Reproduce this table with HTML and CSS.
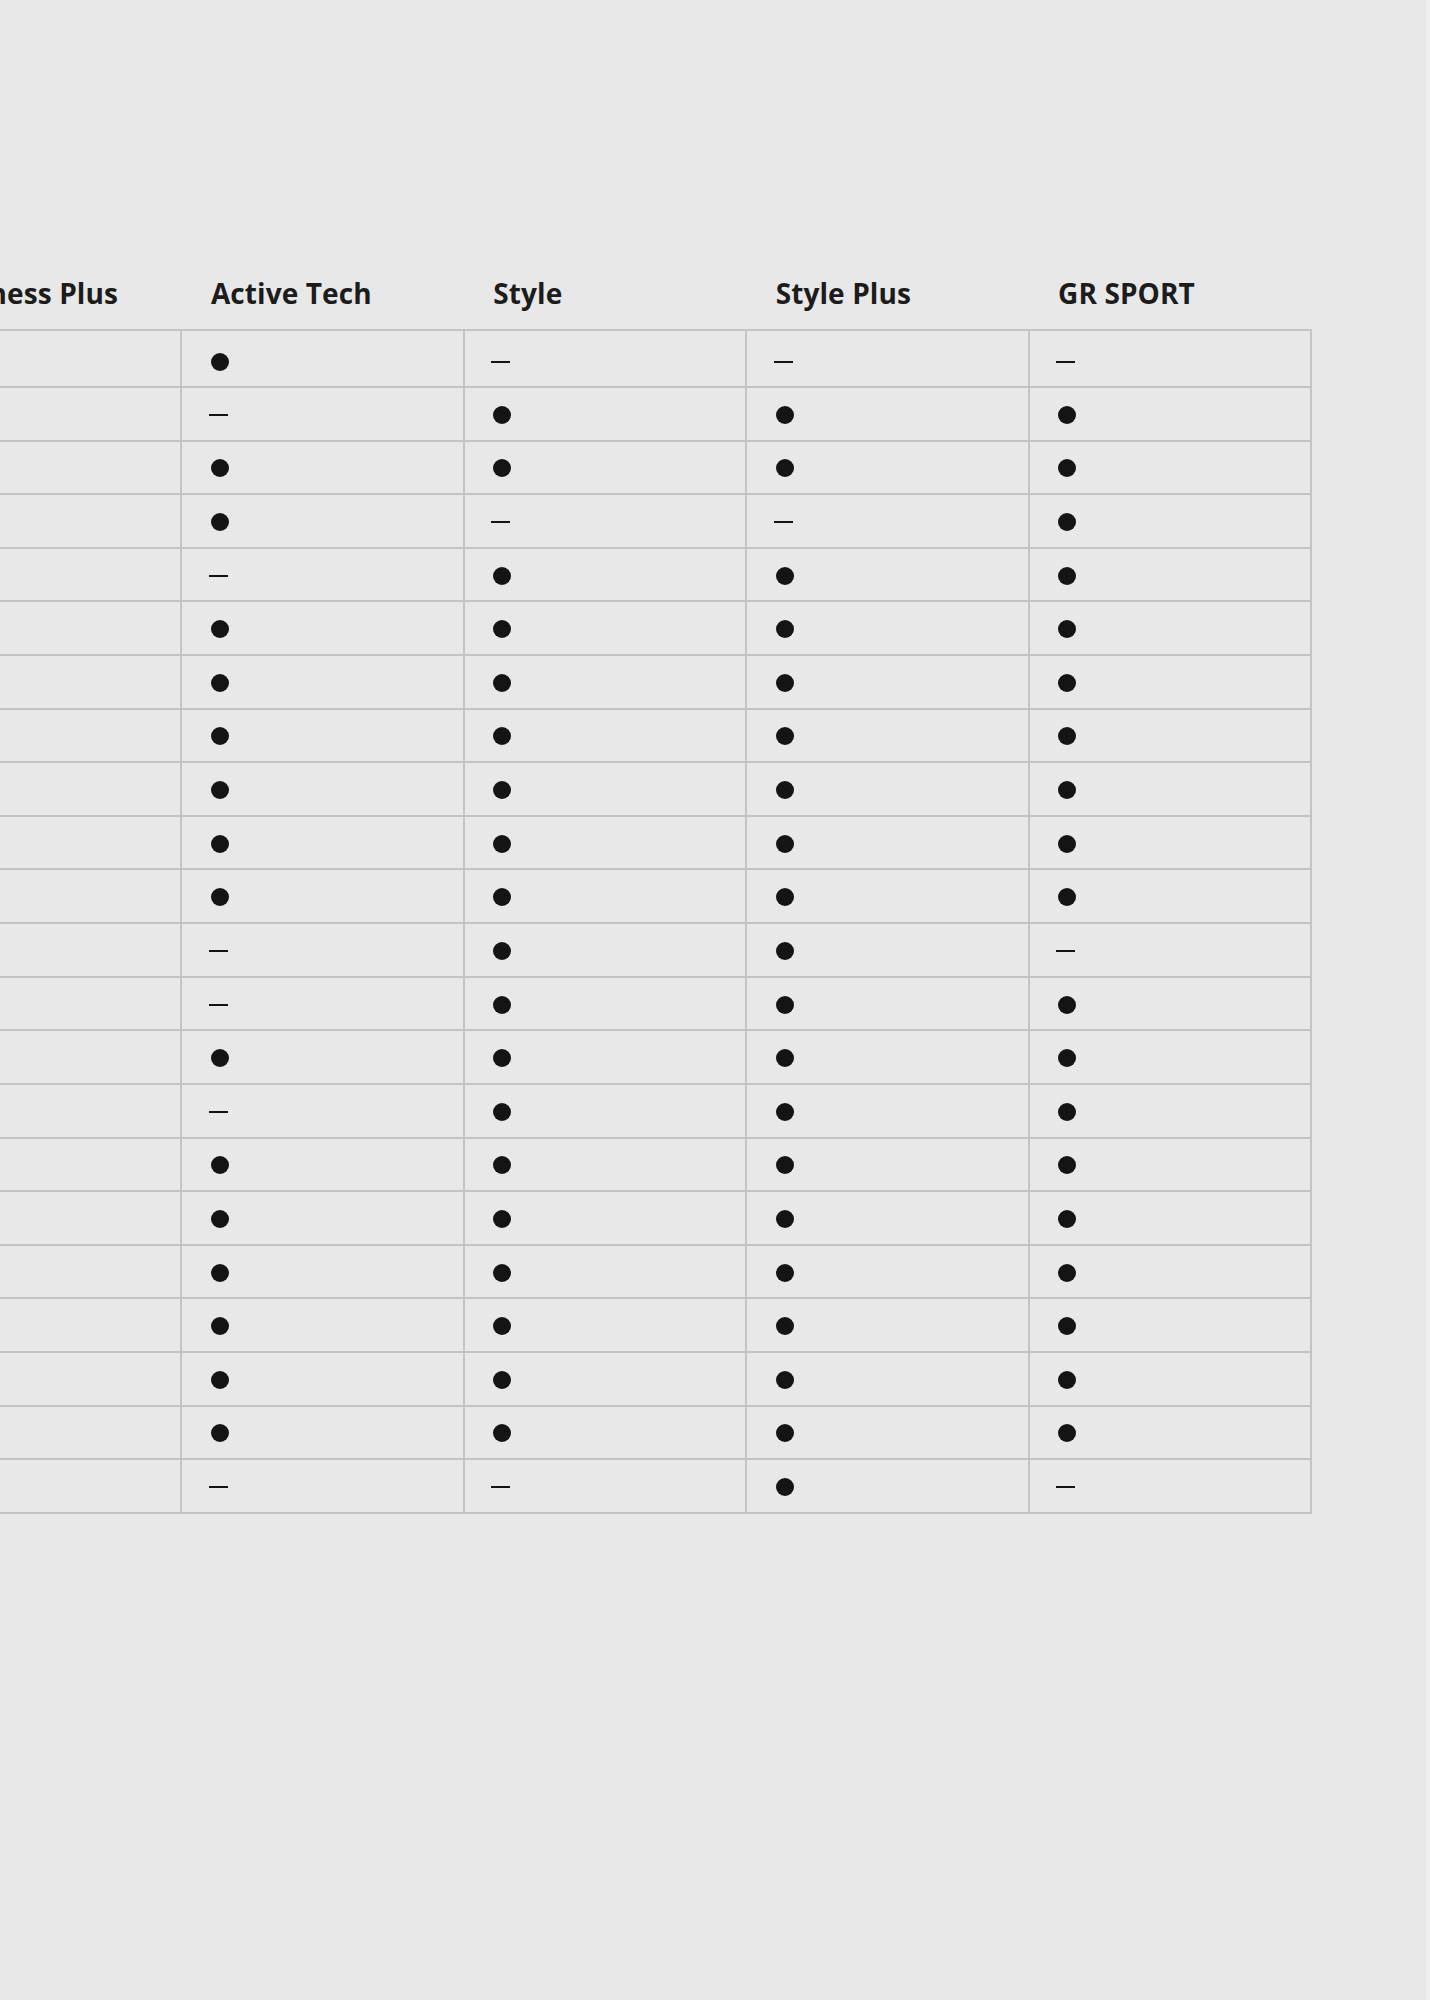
FILE: index.html
```html
<!DOCTYPE html>
<html lang="en">
<head>
<meta charset="utf-8">
<title>Equipment comparison</title>
<link rel="stylesheet" href="styles.css">
</head>
<body>
<div class="page">
  <div class="grid">
    <div class="th">Business Plus</div>
    <div class="th">Active Tech</div>
    <div class="th">Style</div>
    <div class="th">Style Plus</div>
    <div class="th">GR SPORT</div>

    <div class="td first"></div><div class="td first"><i class="dot"></i></div><div class="td first"><i class="dash"></i></div><div class="td first"><i class="dash"></i></div><div class="td first"><i class="dash"></i></div>
    <div class="td"></div><div class="td"><i class="dash"></i></div><div class="td"><i class="dot"></i></div><div class="td"><i class="dot"></i></div><div class="td"><i class="dot"></i></div>
    <div class="td"></div><div class="td"><i class="dot"></i></div><div class="td"><i class="dot"></i></div><div class="td"><i class="dot"></i></div><div class="td"><i class="dot"></i></div>
    <div class="td"></div><div class="td"><i class="dot"></i></div><div class="td"><i class="dash"></i></div><div class="td"><i class="dash"></i></div><div class="td"><i class="dot"></i></div>
    <div class="td"></div><div class="td"><i class="dash"></i></div><div class="td"><i class="dot"></i></div><div class="td"><i class="dot"></i></div><div class="td"><i class="dot"></i></div>
    <div class="td"></div><div class="td"><i class="dot"></i></div><div class="td"><i class="dot"></i></div><div class="td"><i class="dot"></i></div><div class="td"><i class="dot"></i></div>
    <div class="td"></div><div class="td"><i class="dot"></i></div><div class="td"><i class="dot"></i></div><div class="td"><i class="dot"></i></div><div class="td"><i class="dot"></i></div>
    <div class="td"></div><div class="td"><i class="dot"></i></div><div class="td"><i class="dot"></i></div><div class="td"><i class="dot"></i></div><div class="td"><i class="dot"></i></div>
    <div class="td"></div><div class="td"><i class="dot"></i></div><div class="td"><i class="dot"></i></div><div class="td"><i class="dot"></i></div><div class="td"><i class="dot"></i></div>
    <div class="td"></div><div class="td"><i class="dot"></i></div><div class="td"><i class="dot"></i></div><div class="td"><i class="dot"></i></div><div class="td"><i class="dot"></i></div>
    <div class="td"></div><div class="td"><i class="dot"></i></div><div class="td"><i class="dot"></i></div><div class="td"><i class="dot"></i></div><div class="td"><i class="dot"></i></div>
    <div class="td"></div><div class="td"><i class="dash"></i></div><div class="td"><i class="dot"></i></div><div class="td"><i class="dot"></i></div><div class="td"><i class="dash"></i></div>
    <div class="td"></div><div class="td"><i class="dash"></i></div><div class="td"><i class="dot"></i></div><div class="td"><i class="dot"></i></div><div class="td"><i class="dot"></i></div>
    <div class="td"></div><div class="td"><i class="dot"></i></div><div class="td"><i class="dot"></i></div><div class="td"><i class="dot"></i></div><div class="td"><i class="dot"></i></div>
    <div class="td"></div><div class="td"><i class="dash"></i></div><div class="td"><i class="dot"></i></div><div class="td"><i class="dot"></i></div><div class="td"><i class="dot"></i></div>
    <div class="td"></div><div class="td"><i class="dot"></i></div><div class="td"><i class="dot"></i></div><div class="td"><i class="dot"></i></div><div class="td"><i class="dot"></i></div>
    <div class="td"></div><div class="td"><i class="dot"></i></div><div class="td"><i class="dot"></i></div><div class="td"><i class="dot"></i></div><div class="td"><i class="dot"></i></div>
    <div class="td"></div><div class="td"><i class="dot"></i></div><div class="td"><i class="dot"></i></div><div class="td"><i class="dot"></i></div><div class="td"><i class="dot"></i></div>
    <div class="td"></div><div class="td"><i class="dot"></i></div><div class="td"><i class="dot"></i></div><div class="td"><i class="dot"></i></div><div class="td"><i class="dot"></i></div>
    <div class="td"></div><div class="td"><i class="dot"></i></div><div class="td"><i class="dot"></i></div><div class="td"><i class="dot"></i></div><div class="td"><i class="dot"></i></div>
    <div class="td"></div><div class="td"><i class="dot"></i></div><div class="td"><i class="dot"></i></div><div class="td"><i class="dot"></i></div><div class="td"><i class="dot"></i></div>
    <div class="td"></div><div class="td"><i class="dash"></i></div><div class="td"><i class="dash"></i></div><div class="td"><i class="dot"></i></div><div class="td"><i class="dash"></i></div>
  </div>
</div>
</body>
</html>
```
FILE: styles.css
```css
html, body {
  margin: 0;
  padding: 0;
  background: #e8e8e8;
}

.page {
  box-sizing: border-box;
  width: 1430px;
  height: 2000px;
  overflow: hidden;
  padding-top: 274px;
  border-right: 4px solid #efefef;
  font-family: "Open Sans", "Liberation Sans", sans-serif;
  color: #1c1c1c;
}

.grid {
  display: grid;
  grid-template-columns: repeat(5, 282.4px);
  margin-left: -100px;
  width: 1412px;
}

.th {
  box-sizing: border-box;
  height: 55px;
  padding-left: 28.5px;
  font-size: 28px;
  font-weight: 700;
  line-height: 38px;
  letter-spacing: 0.1px;
  white-space: nowrap;
}

.td {
  box-sizing: border-box;
  height: 53.62px;
  padding: 2px 0 0 28.5px;
  display: flex;
  align-items: center;
  border-right: 2px solid #c4c4c4;
  border-bottom: 2px solid #c4c4c4;
}

.td.first {
  height: 59px;
  padding-top: 6px;
  border-top: 2px solid #c4c4c4;
}

.dot {
  display: block;
  width: 18px;
  height: 18px;
  border-radius: 50%;
  background: #141414;
}

.dash {
  display: block;
  width: 19px;
  height: 2px;
  margin-left: -2px;
  background: #141414;
}
```
